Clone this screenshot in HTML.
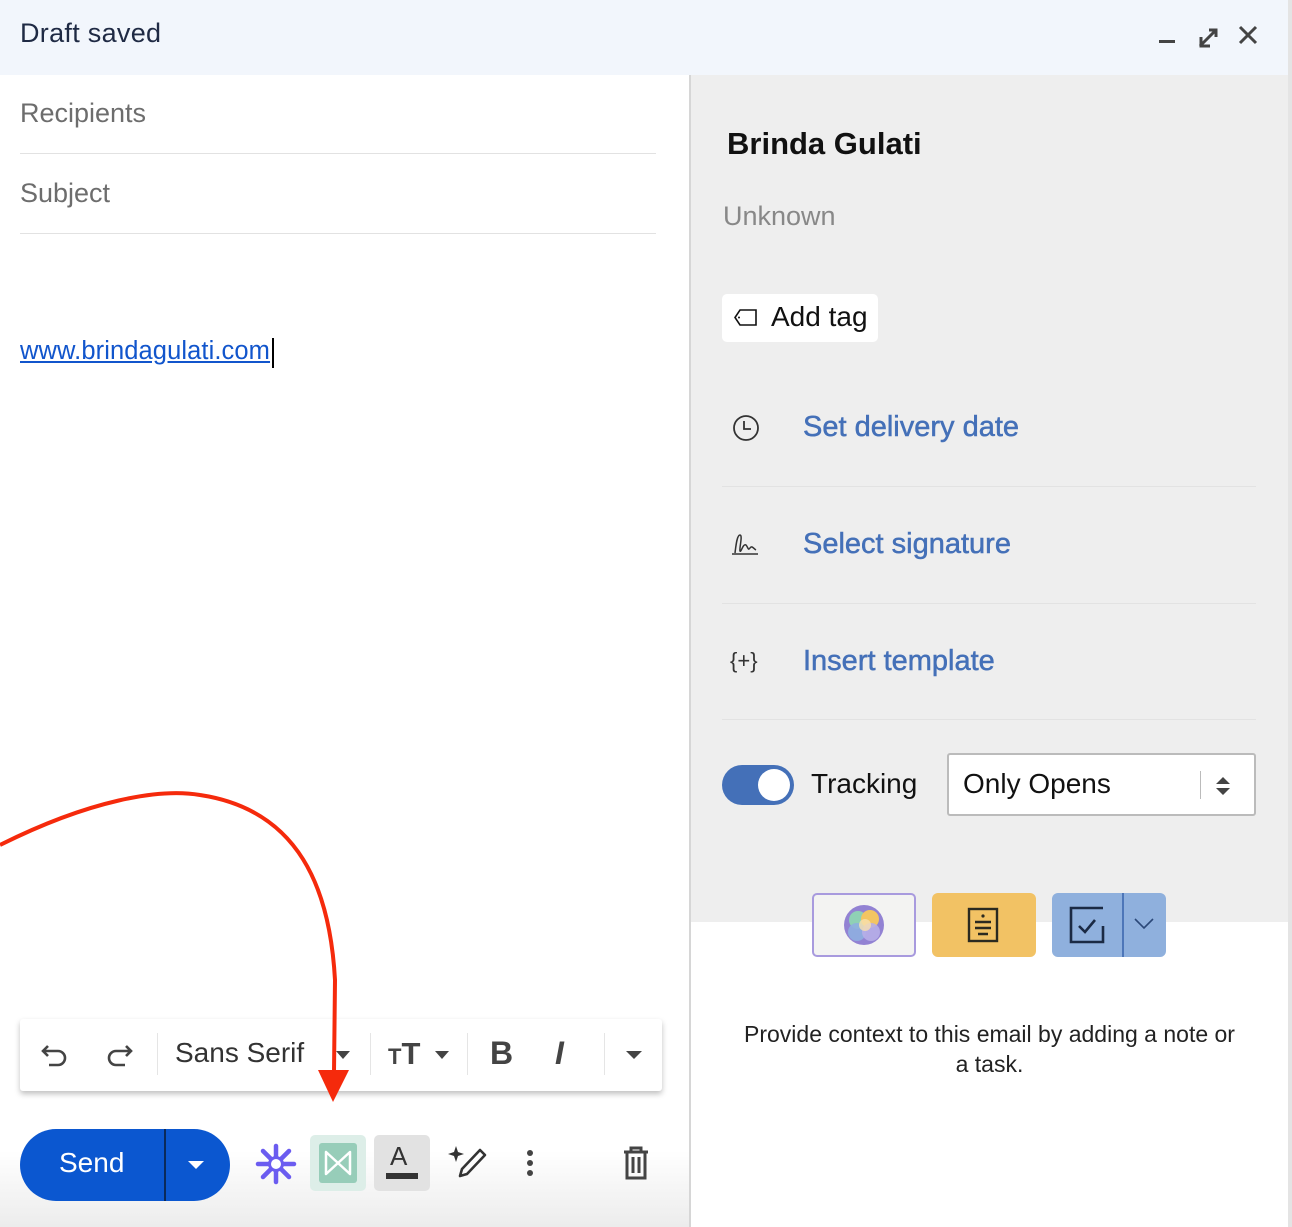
<!DOCTYPE html>
<html><head><meta charset="utf-8"><style>
*{margin:0;padding:0;box-sizing:border-box}
body{width:1292px;height:1227px;position:relative;overflow:hidden;background:#fff;font-family:"Liberation Sans",sans-serif}
.abs{position:absolute}
.hdr{left:0;top:0;width:1288px;height:75px;background:#f2f6fc}
.right{left:689px;top:75px;width:599px;height:847px;background:#eeeeee;border-left:2px solid #d6d6d6}
.right2{left:689px;top:922px;width:599px;height:305px;background:#fff;border-left:2px solid #d6d6d6}
.strip{left:1288px;top:0;width:4px;height:1227px;background:#e4e4e4}
.lnk{color:#4470b8;font-size:29px;-webkit-text-stroke:0.5px #4470b8}
.sep{height:1px;background:#e2e2e2}
</style></head><body>
<div class="abs hdr"></div>
<div class="abs" style="left:20px;top:18px;font-size:27px;color:#1f2a44;letter-spacing:0.3px">Draft saved</div>
<svg class="abs" style="left:1155px;top:22px" width="110" height="30">
<rect x="4" y="18" width="16" height="3" fill="#444"/>
<path d="M45 24 L60 9 M46 15 V24 H55 M54 8 H61 V15" stroke="#444" stroke-width="3" fill="none"/>
<path d="M85 5 L101 21 M101 5 L85 21" stroke="#444" stroke-width="3"/>
</svg>
<div class="abs strip"></div>
<div class="abs" style="left:20px;top:98px;font-size:27px;color:#6d6d6d">Recipients</div>
<div class="abs sep" style="left:20px;top:153px;width:636px"></div>
<div class="abs" style="left:20px;top:178px;font-size:27px;color:#6d6d6d">Subject</div>
<div class="abs sep" style="left:20px;top:233px;width:636px"></div>
<div class="abs" style="left:20px;top:337px;font-size:25.5px;color:#1155cc;text-decoration:underline;letter-spacing:0.1px">www.brindagulati.com</div>
<div class="abs" style="left:272px;top:338px;width:2px;height:30px;background:#000"></div>

<div class="abs right"></div>
<div class="abs right2"></div>
<div class="abs" style="left:727px;top:126px;font-size:31px;font-weight:bold;color:#111">Brinda Gulati</div>
<div class="abs" style="left:723px;top:201px;font-size:27px;color:#888">Unknown</div>
<div class="abs" style="left:722px;top:294px;width:156px;height:48px;background:#fff;border-radius:5px"></div>
<svg class="abs" style="left:733px;top:307px" width="26" height="22"><path d="M7 3 H23 V18 H7 L2 10.5 Z" fill="none" stroke="#111" stroke-width="1.6"/><circle cx="6" cy="10.5" r="1" fill="#111"/></svg>
<div class="abs" style="left:771px;top:301px;font-size:28px;color:#111">Add tag</div>
<svg class="abs" style="left:731px;top:413px" width="30" height="30"><circle cx="15" cy="15" r="12" fill="none" stroke="#333" stroke-width="1.8"/><path d="M13 8 V16 H20" fill="none" stroke="#333" stroke-width="1.8"/></svg>
<div class="abs lnk" style="left:803px;top:411px">Set delivery date</div>
<div class="abs sep" style="left:722px;top:486px;width:534px"></div>
<svg class="abs" style="left:731px;top:531px" width="30" height="26"><path d="M4 22 C5 14 6 4 9 4 C12 4 8 18 9 20 C10 22 12 12 15 14 C17 16 17 20 19 17 C21 14 23 18 25 19" fill="none" stroke="#333" stroke-width="1.5"/><path d="M1 23 H27" stroke="#333" stroke-width="1.5"/></svg>
<div class="abs lnk" style="left:803px;top:528px">Select signature</div>
<div class="abs sep" style="left:722px;top:603px;width:534px"></div>
<div class="abs" style="left:730px;top:648px;font-size:22px;color:#333">{+}</div>
<div class="abs lnk" style="left:803px;top:645px">Insert template</div>
<div class="abs sep" style="left:722px;top:719px;width:534px"></div>
<div class="abs" style="left:722px;top:765px;width:72px;height:40px;border-radius:20px;background:#4470b8"></div>
<div class="abs" style="left:758px;top:769px;width:32px;height:32px;border-radius:16px;background:#fff"></div>
<div class="abs" style="left:811px;top:768px;font-size:28px;color:#111">Tracking</div>
<div class="abs" style="left:947px;top:753px;width:309px;height:63px;background:#fff;border:2px solid #bbb;border-radius:3px"></div>
<div class="abs" style="left:963px;top:768px;font-size:28px;color:#111">Only Opens</div>
<div class="abs" style="left:1200px;top:771px;width:1px;height:28px;background:#bbb"></div>
<svg class="abs" style="left:1213px;top:775px" width="20" height="22"><path d="M3 9 L10 2 L17 9Z M3 13 L10 20 L17 13Z" fill="#444"/></svg>

<div class="abs" style="left:812px;top:893px;width:104px;height:64px;background:#f3f3f2;border:2px solid #a89ade;border-radius:5px"></div>
<svg class="abs" style="left:842px;top:903px" width="44" height="44"><ellipse cx="22" cy="22" rx="20" ry="20" fill="#9282d3"/><circle cx="16" cy="17" r="9" fill="#8fd0b5"/><circle cx="28" cy="16" r="9" fill="#f3c562"/><circle cx="15" cy="29" r="9" fill="#8faee0" opacity=".9"/><circle cx="29" cy="29" r="9" fill="#b7aee8" opacity=".9"/><circle cx="23" cy="22" r="6" fill="#f8e0b0" opacity=".8"/></svg>
<div class="abs" style="left:932px;top:893px;width:104px;height:64px;background:#f2c264;border-radius:6px"></div>
<svg class="abs" style="left:966px;top:907px" width="36" height="36"><rect x="3" y="2" width="28" height="32" fill="none" stroke="#2b2a20" stroke-width="2.4"/><circle cx="17" cy="9" r="1.6" fill="#2b2a20"/><path d="M9 15 H25 M9 21 H25 M12 27 H22" stroke="#2b2a20" stroke-width="2.4"/></svg>
<div class="abs" style="left:1052px;top:893px;width:114px;height:64px;background:#8fb0dd;border-radius:6px"></div>
<div class="abs" style="left:1122px;top:893px;width:2px;height:64px;background:#4d76b8"></div>
<svg class="abs" style="left:1068px;top:906px" width="40" height="40"><path d="M35 2 H3 V36 H35 V20" fill="none" stroke="#1b2a44" stroke-width="2.6"/><path d="M11 20 L17 26 L27 14" fill="none" stroke="#1b2a44" stroke-width="2.6"/></svg>
<svg class="abs" style="left:1133px;top:917px" width="22" height="14"><path d="M2 2 L11 11 L20 2" fill="none" stroke="#2b4878" stroke-width="1.6"/></svg>
<div class="abs" style="left:702px;top:1019px;width:575px;text-align:center;font-size:23px;line-height:30px;color:#222;white-space:nowrap">Provide context to this email by adding a note or<br>a task.</div>

<div class="abs" style="left:20px;top:1019px;width:642px;height:72px;background:#fff;border-radius:3px;box-shadow:0 3px 6px rgba(0,0,0,.25)"></div>
<svg class="abs" style="left:40px;top:1038px" width="100" height="34"><path d="M8 8 L3 13 L8 18 M3 13 H18 A7 7 0 0 1 18 27 H9" fill="none" stroke="#444" stroke-width="2.6"/><path d="M91 8 L96 13 L91 18 M96 13 H81 A7 7 0 0 0 81 27 H90" fill="none" stroke="#444" stroke-width="2.6" transform="translate(-5,0)"/></svg>
<div class="abs" style="left:157px;top:1033px;width:1px;height:42px;background:#e5e5e5"></div>
<div class="abs" style="left:175px;top:1037px;font-size:28px;color:#333">Sans Serif</div>
<svg class="abs" style="left:335px;top:1050px" width="16" height="10"><path d="M1 1 H15 L8 9Z" fill="#444"/></svg>
<div class="abs" style="left:370px;top:1033px;width:1px;height:42px;background:#e5e5e5"></div>
<div class="abs" style="left:388px;top:1036px;font-size:31px;font-weight:bold;color:#444"><span style="font-size:22px">T</span>T</div>
<svg class="abs" style="left:434px;top:1050px" width="16" height="10"><path d="M1 1 H15 L8 9Z" fill="#444"/></svg>
<div class="abs" style="left:467px;top:1033px;width:1px;height:42px;background:#e5e5e5"></div>
<div class="abs" style="left:490px;top:1035px;font-size:32px;font-weight:bold;color:#444">B</div>
<div class="abs" style="left:555px;top:1035px;font-size:32px;font-weight:bold;font-style:italic;color:#444">I</div>
<div class="abs" style="left:604px;top:1033px;width:1px;height:42px;background:#e5e5e5"></div>
<svg class="abs" style="left:625px;top:1050px" width="18" height="10"><path d="M1 1 H17 L9 9Z" fill="#444"/></svg>

<div class="abs" style="left:0;top:1100px;width:689px;height:127px;background:linear-gradient(#fff 40%,#ececec)"></div>
<div class="abs" style="left:20px;top:1129px;width:210px;height:72px;background:#0b57d0;border-radius:36px"></div>
<div class="abs" style="left:164px;top:1129px;width:2px;height:72px;background:#0b2a5a"></div>
<div class="abs" style="left:59px;top:1147px;font-size:28px;color:#fff">Send</div>
<svg class="abs" style="left:187px;top:1160px" width="18" height="10"><path d="M1 1 H17 L9 9Z" fill="#fff"/></svg>
<svg class="abs" style="left:254px;top:1142px" width="44" height="44"><g stroke="#6b5cf0" stroke-width="4.5" stroke-linecap="round"><path d="M22 4 V40 M4 22 H40 M9 9 L35 35 M35 9 L9 35"/></g><circle cx="22" cy="22" r="8" fill="#6b5cf0"/><circle cx="22" cy="22" r="5" fill="#fff"/></svg>
<div class="abs" style="left:310px;top:1135px;width:56px;height:56px;background:#ddeee8;border-radius:5px"></div>
<div class="abs" style="left:319px;top:1143px;width:38px;height:40px;background:#97cdb9;border-radius:3px"></div>
<svg class="abs" style="left:319px;top:1143px" width="38" height="40"><path d="M7 9 V31 L19 20 L31 31 V9 L19 20Z" fill="none" stroke="#fff" stroke-width="2.5" stroke-linejoin="round"/></svg>
<div class="abs" style="left:374px;top:1135px;width:56px;height:56px;background:#e2e2e2;border-radius:5px"></div>
<div class="abs" style="left:390px;top:1141px;font-size:26px;color:#333">A</div>
<div class="abs" style="left:386px;top:1173px;width:32px;height:6px;background:#333"></div>
<svg class="abs" style="left:446px;top:1144px" width="42" height="36"><path d="M10 2 L12 8 L18 10 L12 12 L10 18 L8 12 L2 10 L8 8Z" fill="#333"/><path d="M34 6 L39 11 L21 30 L14 32 L16 25Z" fill="none" stroke="#333" stroke-width="2.6" stroke-linejoin="round"/></svg>
<svg class="abs" style="left:524px;top:1149px" width="12" height="28"><circle cx="6" cy="4" r="3" fill="#444"/><circle cx="6" cy="14" r="3" fill="#444"/><circle cx="6" cy="24" r="3" fill="#444"/></svg>
<svg class="abs" style="left:622px;top:1146px" width="28" height="34"><path d="M2 6 H26 M9 6 V2 H19 V6 M5 6 V32 H23 V6 M11 11 V27 M17 11 V27" fill="none" stroke="#444" stroke-width="3"/></svg>

<svg class="abs" style="left:0;top:780px" width="400" height="330"><path d="M0 65 C90 20 160 8 200 15 C300 30 330 110 335 200 L334 292" fill="none" stroke="#f52a0c" stroke-width="4"/><path d="M318 290 L349 290 L333 322Z" fill="#f52a0c"/></svg>
</body></html>
